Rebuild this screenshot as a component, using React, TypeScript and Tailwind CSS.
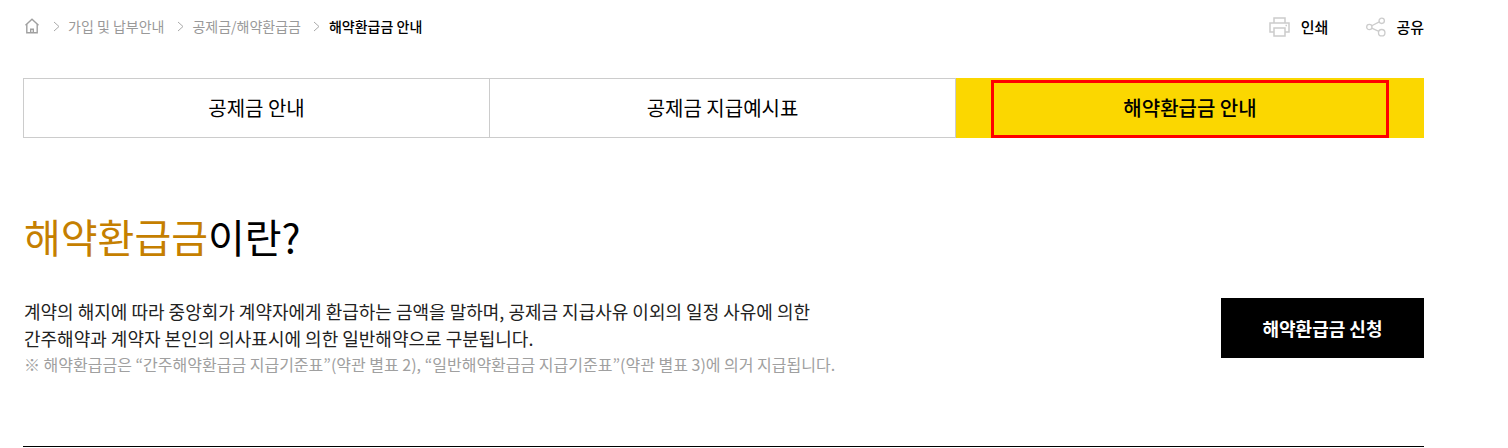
const font = "font-['Noto_Sans_CJK_KR','Noto_Sans',sans-serif]";

function Chevron() {
  return (
    <svg width="7" height="11" viewBox="0 0 7 11" fill="none" stroke="#aaaaaa" strokeWidth="1" className="shrink-0">
      <path d="M1 1l5 4.5L1 10" />
    </svg>
  );
}

function Crumbs() {
  return (
    <div className="flex items-center text-[14px] leading-[20px] text-[#999999]">
      <svg width="16" height="16" viewBox="0 0 16 16" fill="none" stroke="#a0a0a0" strokeWidth="1.4" className="ml-px mr-[13px]">
        <path d="M1.5 7.2L8 1.2l6.5 6" />
        <path d="M2.8 6.2v8.6h10.4V6.2" />
        <path d="M6.7 14.8v-3.6h2.6v3.6" />
      </svg>
      <Chevron />
      <span className="ml-[8px] mr-[13px]">가입 및 납부안내</span>
      <Chevron />
      <span className="ml-[8px] mr-[12px]">공제금/해약환급금</span>
      <Chevron />
      <span className="ml-[9px] font-medium text-black">해약환급금 안내</span>
    </div>
  );
}

function Tools() {
  return (
    <div className="flex items-center text-[15px] leading-[20px] font-medium text-black">
      <svg width="21" height="20" viewBox="0 0 21 20" fill="none" stroke="#cccccc" strokeWidth="1.5">
        <path d="M5 6V1h11v5" />
        <path d="M5 15H1V6h19v9h-4" />
        <path d="M5 11h11v8H5z" />
        <path d="M16.5 8.5h1.5" />
      </svg>
      <span className="ml-[11px]">인쇄</span>
      <svg width="20" height="20" viewBox="0 0 21 20" fill="none" stroke="#cccccc" strokeWidth="1.4" className="ml-[38px]">
        <circle cx="3.5" cy="10" r="2.8" />
        <circle cx="16.5" cy="3.5" r="2.8" />
        <circle cx="16.5" cy="16" r="3.4" />
        <path d="M6 8.7l8-4M6 11.3l7.5 3.2" />
      </svg>
      <span className="ml-[10px]">공유</span>
    </div>
  );
}

export default function App() {
  return (
    <div className={`${font} h-[448px] w-[1508px] overflow-hidden bg-white pl-[23px] pr-[84px]`}>
      <div className="flex h-[78px] items-start justify-between">
        <div className="pt-[16px]"><Crumbs /></div>
        <div className="pt-[17px]"><Tools /></div>
      </div>

      <div className="flex h-[60px] text-[20px] text-black">
        <div className="flex w-[467px] shrink-0 items-center justify-center border border-[#cccccc]">공제금 안내</div>
        <div className="flex w-[466px] shrink-0 items-center justify-center border-y border-r border-[#cccccc]">공제금 지급예시표</div>
        <div className="relative flex flex-1 items-center justify-center bg-[#fbd700] font-medium">
          <div className="absolute left-[35px] top-[2px] h-[58px] w-[398px] border-[3px] border-[#ff0000]" />
          <span>해약환급금 안내</span>
        </div>
      </div>

      <h2 className="mt-[68px] pl-px text-[40px] font-normal leading-[60px] text-black">
        <span className="text-[#c57f00]">해약환급금</span>이란?
      </h2>

      <div className="mt-[32px] flex items-start justify-between">
        <div className="pl-px">
          <p className="text-[18px] leading-[27px] text-[#222222]">
            계약의 해지에 따라 중앙회가 계약자에게 환급하는 금액을 말하며, 공제금 지급사유 이외의 일정 사유에 의한
            <br />
            간주해약과 계약자 본인의 의사표시에 의한 일반해약으로 구분됩니다.
          </p>
          <p className="text-[16px] leading-[24px] text-[#a0a0a0]">
            ※ 해약환급금은 “간주해약환급금 지급기준표”(약관 별표 2), “일반해약환급금 지급기준표”(약관 별표 3)에 의거 지급됩니다.
          </p>
        </div>
        <button type="button" className="flex h-[60px] w-[203px] items-center justify-center bg-black text-[18px] font-bold text-white">
          해약환급금 신청
        </button>
      </div>

      <div className="mt-[70px] h-px bg-black" />
    </div>
  );
}
